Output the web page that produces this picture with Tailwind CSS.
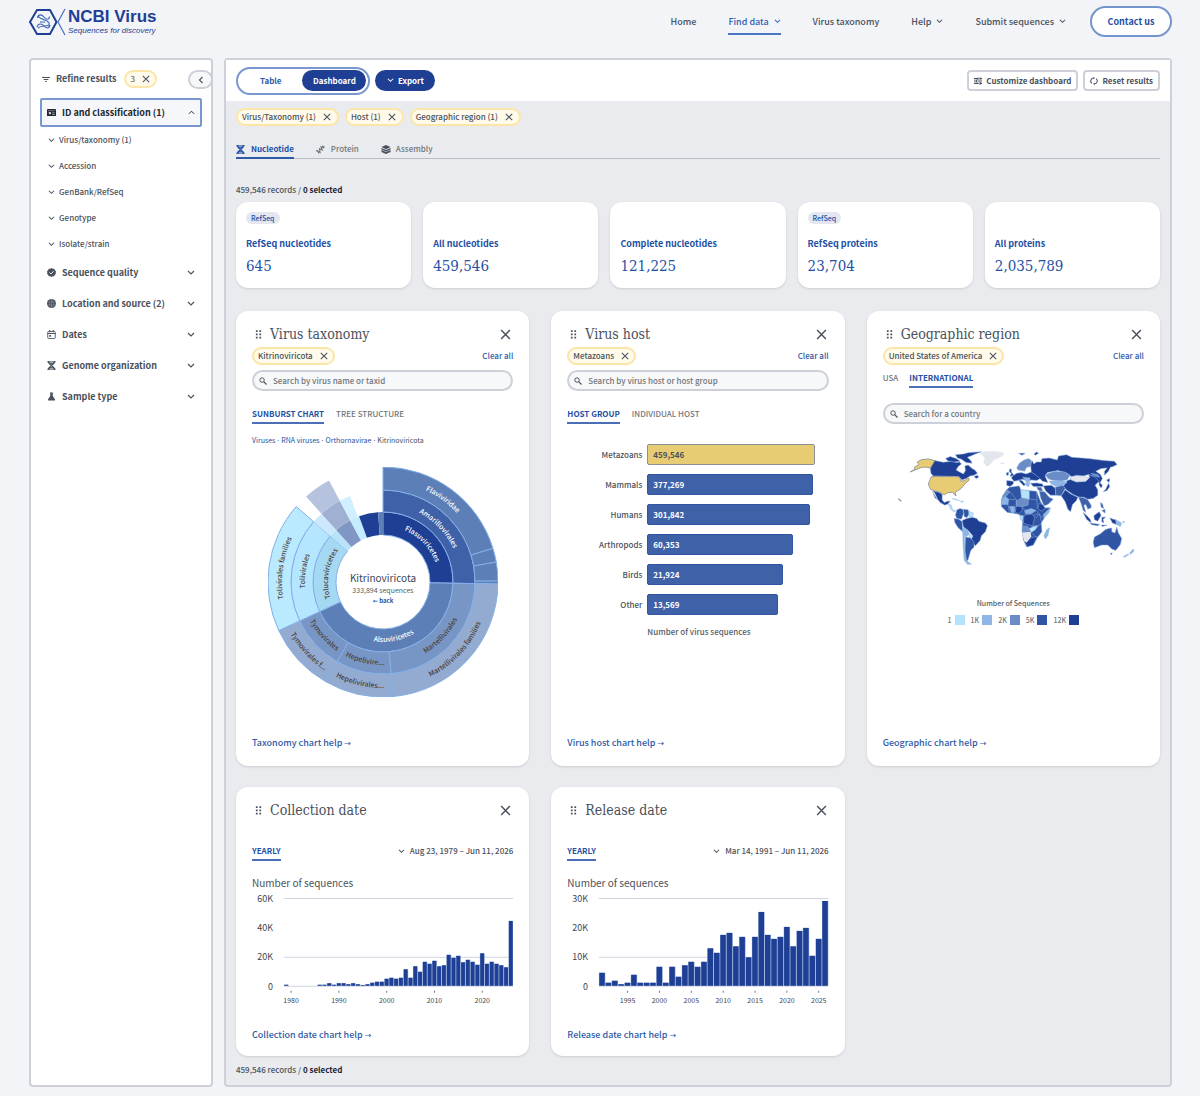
<!doctype html>
<html lang="en">
  <head>
    <meta charset="UTF-8" />
    <meta name="viewport" content="width=device-width, initial-scale=1.0" />
    <title>NCBI Virus</title>
    <script src="https://cdn.jsdelivr.net/npm/@tailwindcss/browser@4"></script>
  </head>
  <body class="flex min-h-screen flex-col bg-[#f2f4f8] pr-7 pb-[9px] pl-[29px] font-['Noto_Sans_CJK_JP','Noto_Sans_CJK_SC',sans-serif] text-[8px] leading-4 font-medium text-[#4a515c]">
    <!-- icon sprite -->
    <svg class="hidden">
      <symbol id="down" viewBox="0 0 8 8"><path d="M1 2 4 5 7 2" fill="none" stroke="currentColor" stroke-width="1.2" /></symbol>
      <symbol id="up" viewBox="0 0 8 8"><path d="M1 5.5 4 2.5 7 5.5" fill="none" stroke="currentColor" stroke-width="1.1" /></symbol>
      <symbol id="left" viewBox="0 0 8 8"><path d="M5.5 1 2.5 4 5.5 7" fill="none" stroke="currentColor" stroke-width="1.1" /></symbol>
      <symbol id="close" viewBox="0 0 10 10"><path d="M1 1 9 9M9 1 1 9" fill="none" stroke="currentColor" stroke-width="1.3" /></symbol>
      <symbol id="search" viewBox="0 0 10 10"><circle cx="3.8" cy="3.8" r="2.8" fill="none" stroke="currentColor" stroke-width="1.2" /><path d="M5.8 5.8 9.4 9.4" stroke="currentColor" stroke-width="1.4" /></symbol>
      <symbol id="drag" viewBox="0 0 8 10"><path d="M1 0h2v2H1zM5 0h2v2H5zM1 3.8h2v2H1zM5 3.8h2v2H5zM1 7.6h2v2H1zM5 7.6h2v2H5z" fill="currentColor" /></symbol>
      <symbol id="filter" viewBox="0 0 10 8"><path d="M0 1.5H10M2 4H8M4 6.5H6" stroke="currentColor" stroke-width="1.4" /></symbol>
      <symbol id="card" viewBox="0 0 10 10"><rect x="0" y="1" width="10" height="8" rx="1" fill="currentColor" /><path d="M1 3H9" stroke="#fff" stroke-width=".4" /><path d="M2 4.5h2.5v2.5H2zM6 5h2.5v.8H6zM6 6.6h2.5v.8H6z" fill="#ccc" /></symbol>
      <symbol id="check" viewBox="0 0 10 10"><path d="M5 0 6.4.8 8 .9 8.8 2.4 10 3.6 9.6 5 10 6.4 8.8 7.6 8 9.1 6.4 9.2 5 10 3.6 9.2 2 9.1 1.2 7.6 0 6.4.4 5 0 3.6 1.2 2.4 2 .9 3.6.8Z" fill="currentColor" /><path d="M2.8 5 4.4 6.6 7.3 3.6" fill="none" stroke="#fff" stroke-width="1" /></symbol>
      <symbol id="globe" viewBox="0 0 10 10"><circle cx="5" cy="5" r="5" fill="currentColor" /><path d="M0 3.5H10M0 6.5H10M5 0V10M5 0C2 2.5 2 7.5 5 10M5 0C8 2.5 8 7.5 5 10" fill="none" stroke="#aaa" stroke-width=".4" /></symbol>
      <symbol id="calendar" viewBox="0 0 10 10"><rect x=".8" y="1.6" width="8.4" height="7.8" rx="1" fill="none" stroke="currentColor" stroke-width="1" /><path d="M.8 3.8H9.2M3 0V2.4M7 0V2.4" stroke="currentColor" stroke-width="1.2" /><path d="M2.5 5.5H4.5V7.5H2.5z" fill="currentColor" /></symbol>
      <symbol id="dna" viewBox="0 0 10 10"><path d="M1.5 0C1.5 4 8.5 6 8.5 10M8.5 0C8.5 4 1.5 6 1.5 10" fill="none" stroke="currentColor" stroke-width="1.6" /><path d="M.5 1H9.5M2 2.6H8M2 7.4H8M.5 9H9.5" stroke="currentColor" stroke-width="1.1" /></symbol>
      <symbol id="flask" viewBox="0 0 10 10"><path d="M3.2.5h3.6v1H6.4v3L9 8.2Q9.3 9.4 8 9.4H2Q.7 9.4 1 8.2L3.6 4.5v-3H3.2Z" fill="currentColor" /></symbol>
      <symbol id="protein" viewBox="0 0 10 10"><path d="M.5 7C1 4 3 9 3.2 9.5M1 6.2 4.6 8.2 3.8 4.2 7 5.6 5.6 2 9 3.2M7 .8 9.6 2.6" fill="none" stroke="currentColor" stroke-width="1.2" /></symbol>
      <symbol id="layers" viewBox="0 0 10 10"><path d="M0 2.3 5 0 10 2.3 5 4.6ZM0 3.2 5 5.5 10 3.2V4.9L5 7.2 0 4.9ZM0 5.6 5 7.9 10 5.6V7.8L5 10 0 7.8Z" fill="currentColor" /></symbol>
      <symbol id="tune" viewBox="0 0 10 10"><path d="M0 2H5M7 2H10M0 5H3M5 5H10M0 8H6M8 8H10M5 .5V3.5M3.4 3.5V6.5M7.6 6.3V9.7M7.5 .5V3.5" stroke="currentColor" stroke-width="1.4" /></symbol>
      <symbol id="reset" viewBox="0 0 10 10"><path d="M2.4 8A3.8 3.8 0 0 1 4.6 1.2M7.6 2A3.8 3.8 0 0 1 5.4 8.8" fill="none" stroke="currentColor" stroke-width="1.3" /><path d="M4 0 6.2 1.3 4 2.8ZM6 7.2 3.8 8.7 6 10Z" fill="currentColor" /></symbol>
    </svg>

    <header class="flex h-[58px] items-start justify-between">
      <a href="#" class="flex pt-2 text-[#1f3f94]">
        <svg class="h-7 w-[38px]" viewBox="0 0 38 28" fill="none" stroke="currentColor">
          <path d="M8 2H21L27.500 14 21 26H8L1 14Z" stroke-width="2" />
          <path d="M36 1 29 14 36 27" stroke="#4a6fbd" stroke-width="1.200" />
          <path d="M8.500 10C9 5.500 13 6.500 15 9S20 12.500 20.500 8.500M8 19C9 15 13 15.500 15 18S20 21 21 17M9 8C11 12 18 11 20 15S12 17 9 20M11 14H16" stroke="#3a63b5" stroke-width="1.100" />
        </svg>
        <span class="ml-px font-['Liberation_Sans',Arial,sans-serif]">
          <span class="block text-[17px] leading-[18px] font-bold">NCBI Virus</span>
          <span class="block text-[8px] leading-[9px] font-normal italic">Sequences for discovery</span>
        </span>
      </a>
      <nav class="flex gap-8 pt-[14px] text-[9px]">
        <a href="#">Home</a>
        <a href="#" class="flex h-[21px] items-start gap-[5px] border-b-2 border-[#4a76c4] text-[#2f5fb5]">Find data <svg class="mt-1 size-[7px]"><use href="#down" /></svg></a>
        <a href="#">Virus taxonomy</a>
        <a href="#" class="flex gap-[5px]">Help <svg class="mt-1 size-[7px]"><use href="#down" /></svg></a>
        <a href="#" class="flex gap-[5px]">Submit sequences <svg class="mt-1 size-[7px]"><use href="#down" /></svg></a>
        <a href="#" class="-mt-2 -ml-2 flex h-[31px] w-[82px] items-center justify-center rounded-full border-2 border-[#7495cc] bg-white font-bold text-[#2450a4]">Contact us</a>
      </nav>
    </header>

    <div class="flex flex-1 gap-[11px]">
      <aside class="relative w-[184px] shrink-0 rounded-sm border-2 border-[#cdd0d8] bg-white px-[9px] pt-[10px]">
        <div class="flex h-[18px] items-center px-[2px] text-[9px] font-bold">
          <svg class="mr-[6px] h-[7px] w-2"><use href="#filter" /></svg>
          Refine results
          <button class="ml-[7px] flex h-[18px] items-center gap-[7px] rounded-full border-2 border-[#fbe6a8] bg-[#fffaea] px-[5px] text-[8px] font-normal">3 <svg class="size-2"><use href="#close" /></svg></button>
        </div>
        <button aria-label="Collapse filters" class="absolute top-[10px] -right-[2px] flex h-[19px] w-[25px] items-center justify-center rounded-full border-2 border-[#cdd0d8] bg-[#f7f8fa]"><svg class="size-2"><use href="#left" /></svg></button>
        <button class="mt-[10px] flex h-[29px] w-full items-center rounded-xs border-2 border-[#7898cf] bg-[#f5f7fa] px-[5px] text-[9px] font-bold text-[#20262f]">
          <svg class="mr-[6px] size-[9px]"><use href="#card" /></svg>ID and classification (1)<svg class="ml-auto size-[7px]"><use href="#up" /></svg>
        </button>
        <ul id="fields"></ul>
        <ul id="groups"></ul>
      </aside>

      <main class="min-w-0 flex-1 rounded-sm border-2 border-[#cdd0d8] bg-[#e9ebef]">
        <div class="flex h-[41px] items-center bg-white px-[10px]">
          <div class="flex h-[28px] items-center rounded-full border-2 border-[#7898cf] p-[2px] pl-[22px] font-bold">
            <button class="text-[#2f5aa8]">Table</button>
            <button class="ml-[21px] h-[21px] w-16 rounded-full bg-[#1f3f94] text-white">Dashboard</button>
          </div>
          <button class="ml-[5px] flex h-[21px] w-[60px] items-center justify-center gap-1 rounded-full bg-[#1f3f94] font-bold text-white"><svg class="size-[7px]"><use href="#down" /></svg>Export</button>
          <button class="ml-auto flex h-[21px] items-center gap-1 rounded-sm border-2 border-[#cdd0d8] px-[5px] font-bold"><svg class="size-2"><use href="#tune" /></svg>Customize dashboard</button>
          <button class="ml-[5px] flex h-[21px] items-center gap-1 rounded-sm border-2 border-[#cdd0d8] px-[5px] font-bold"><svg class="size-2"><use href="#reset" /></svg>Reset results</button>
        </div>

        <div class="px-[10px] pt-[7px]">
          <div class="flex gap-[6px]">
            <button class="flex h-[18px] items-center gap-[7px] rounded-full border-2 border-[#fbe6a8] bg-[#fffaea] pr-[6px] pl-1">Virus/Taxonomy (1)<svg class="size-2"><use href="#close" /></svg></button>
            <button class="flex h-[18px] items-center gap-[7px] rounded-full border-2 border-[#fbe6a8] bg-[#fffaea] pr-[6px] pl-1">Host (1)<svg class="size-2"><use href="#close" /></svg></button>
            <button class="flex h-[18px] items-center gap-[7px] rounded-full border-2 border-[#fbe6a8] bg-[#fffaea] pr-[6px] pl-1">Geographic region (1)<svg class="size-2"><use href="#close" /></svg></button>
          </div>
          <div class="mt-[15px] flex gap-[22px] border-b border-[#b9bdc7] text-[#71767a]">
            <button class="-mb-px flex items-center gap-[6px] border-b-2 border-[#2f5aa8] font-bold text-[#2450a4]"><svg class="size-[9px]"><use href="#dna" /></svg>Nucleotide</button>
            <button class="-mb-px flex items-center gap-[6px] border-b-2 border-transparent"><svg class="size-[9px]"><use href="#protein" /></svg>Protein</button>
            <button class="-mb-px flex items-center gap-[5px] border-b-2 border-transparent"><svg class="h-[9px] w-[10px] text-[#4a515c]"><use href="#layers" /></svg>Assembly</button>
          </div>

          <p class="mt-[23px]">459,546 records / <b class="text-[#20262f]">0 selected</b></p>

          <section id="stats" class="mt-1 grid grid-cols-5 gap-3"></section>

          <section class="mt-[23px] grid grid-cols-3 gap-x-[22px] gap-y-[21px]">
            <article class="flex min-h-[455px] flex-col rounded-xl bg-white px-4 pt-3 pb-[14px] shadow-sm">
              <div class="flex h-[22px] items-center gap-2">
                <svg class="ml-[3px] h-[9px] w-[7px]"><use href="#drag" /></svg>
                <h2 class="font-['DejaVu_Serif_Condensed','DejaVu_Serif',serif] text-[14px] font-normal">Virus taxonomy</h2>
                <button aria-label="Remove Virus taxonomy" class="mr-[2px] ml-auto"><svg class="size-[11px]"><use href="#close" /></svg></button>
              </div>
              <div class="mt-[2px] flex h-[18px] items-center justify-between">
                <button class="flex h-[18px] items-center gap-[7px] rounded-full border-2 border-[#fbe6a8] bg-[#fffaea] pr-[5px] pl-1">Kitrinoviricota<svg class="size-2"><use href="#close" /></svg></button>
                <a href="#" class="text-[#2f5aa8]">Clear all</a>
              </div>
              <label class="mt-[5px] flex h-[21px] items-center gap-[6px] rounded-full border-2 border-[#cdd0d8] bg-[#f7f8fa] pr-2 pl-[5px]">
                <svg class="size-2"><use href="#search" /></svg>
                <input type="text" aria-label="Search by virus name or taxid" placeholder="Search by virus name or taxid" class="min-w-0 flex-1 leading-4 outline-none placeholder:text-[#71767a]" />
              </label>
              <div class="mt-[15px] flex gap-3 text-[#71767a]">
                <button class="border-b-2 border-[#4a6fb8] font-bold text-[#2450a4]">SUNBURST CHART</button>
                <button class="border-b-2 border-transparent">TREE STRUCTURE</button>
              </div>
              <p class="mt-2 flex gap-px text-[7px] font-normal">
                <a href="#" class="text-[#2450a4]">Viruses</a>·<a href="#" class="text-[#2450a4]">RNA viruses</a>·<a href="#" class="text-[#2450a4]">Orthornavirae</a>·<span>Kitrinoviricota</span>
              </p>
              <svg id="sunburst" class="mx-auto mt-[19px] size-[230px] shrink-0" viewBox="-115 -115 230 230"></svg>
              <a href="#" class="mt-auto text-[9px] text-[#2f5aa8]">Taxonomy chart help <span class="font-['DejaVu_Sans'] text-[8px]">→</span></a>
            </article>

            <article class="flex min-h-[455px] flex-col rounded-xl bg-white px-4 pt-3 pb-[14px] shadow-sm">
              <div class="flex h-[22px] items-center gap-2">
                <svg class="ml-[3px] h-[9px] w-[7px]"><use href="#drag" /></svg>
                <h2 class="font-['DejaVu_Serif_Condensed','DejaVu_Serif',serif] text-[14px] font-normal">Virus host</h2>
                <button aria-label="Remove Virus host" class="mr-[2px] ml-auto"><svg class="size-[11px]"><use href="#close" /></svg></button>
              </div>
              <div class="mt-[2px] flex h-[18px] items-center justify-between">
                <button class="flex h-[18px] items-center gap-[7px] rounded-full border-2 border-[#fbe6a8] bg-[#fffaea] pr-[5px] pl-1">Metazoans<svg class="size-2"><use href="#close" /></svg></button>
                <a href="#" class="text-[#2f5aa8]">Clear all</a>
              </div>
              <label class="mt-[5px] flex h-[21px] items-center gap-[6px] rounded-full border-2 border-[#cdd0d8] bg-[#f7f8fa] pr-2 pl-[5px]">
                <svg class="size-2"><use href="#search" /></svg>
                <input type="text" aria-label="Search by virus host or host group" placeholder="Search by virus host or host group" class="min-w-0 flex-1 leading-4 outline-none placeholder:text-[#71767a]" />
              </label>
              <div class="mt-[15px] flex gap-3 text-[#71767a]">
                <button class="border-b-2 border-[#4a6fb8] font-bold text-[#2450a4]">HOST GROUP</button>
                <button class="border-b-2 border-transparent">INDIVIDUAL HOST</button>
              </div>
              <div id="hosts" class="mt-5 grid grid-cols-[75px_1fr] items-center gap-x-[5px] gap-y-[9px]"></div>
              <p class="mt-[9px] ml-20 text-[#565c65]">Number of virus sequences</p>
              <a href="#" class="mt-auto text-[9px] text-[#2f5aa8]">Virus host chart help <span class="font-['DejaVu_Sans'] text-[8px]">→</span></a>
            </article>

            <article class="flex min-h-[455px] flex-col rounded-xl bg-white px-4 pt-3 pb-[14px] shadow-sm">
              <div class="flex h-[22px] items-center gap-2">
                <svg class="ml-[3px] h-[9px] w-[7px]"><use href="#drag" /></svg>
                <h2 class="font-['DejaVu_Serif_Condensed','DejaVu_Serif',serif] text-[14px] font-normal">Geographic region</h2>
                <button aria-label="Remove Geographic region" class="mr-[2px] ml-auto"><svg class="size-[11px]"><use href="#close" /></svg></button>
              </div>
              <div class="mt-[2px] flex h-[18px] items-center justify-between">
                <button class="flex h-[18px] items-center gap-[7px] rounded-full border-2 border-[#fbe6a8] bg-[#fffaea] pr-[5px] pl-1">United States of America<svg class="size-2"><use href="#close" /></svg></button>
                <a href="#" class="text-[#2f5aa8]">Clear all</a>
              </div>
              <div class="mt-[5px] flex gap-[11px] text-[#71767a]">
                <button class="border-b-2 border-transparent">USA</button>
                <button class="border-b-2 border-[#4a6fb8] font-bold text-[#2450a4]">INTERNATIONAL</button>
              </div>
              <label class="mt-[15px] flex h-[21px] items-center gap-[6px] rounded-full border-2 border-[#cdd0d8] bg-[#f7f8fa] pr-2 pl-[5px]">
                <svg class="size-2"><use href="#search" /></svg>
                <input type="text" aria-label="Search for a country" placeholder="Search for a country" class="min-w-0 flex-1 leading-4 outline-none placeholder:text-[#71767a]" />
              </label>
              <svg class="mt-4 w-full" viewBox="-6 0 786 390" stroke="#8fb4e3" stroke-width="1.500" stroke-linejoin="round">
                <g fill="#e4e6ee" stroke="none">
                  <path d="M285 38 305 34 330 34 358 38 354 48 340 56 328 60 314 76 306 80 296 68 300 54Z" />
                  <path d="M346 70 354 67 360 70 352 74Z" />
                </g>
                <!-- Americas -->
                <g fill="#1f3f94">
                  <path d="M137 64 150 62 175 67 200 64 216 68 224 66 230 72 220 80 214 90 224 96 236 102 242 92 240 78 250 75 262 86 270 90 278 100 268 106 256 108 244 116 232 120 222 110 145 108 138 100 136 84Z" />
                  <path d="M182 56 196 50 214 56 226 64 208 66 190 63ZM212 44 236 42 250 38 290 35 272 42 258 48 248 52 258 62 262 70 244 68 230 58 218 54Z" />
                  <path d="M268 110 278 106 282 112 274 116Z" />
                  <path d="M143 153 162 157 172 163 172 180 178 188 188 184 196 184 190 192 180 196 166 188 158 178 150 160ZM144 158 150 168 156 178 150 174Z" />
                  <path d="M232 242 246 236 262 232 276 236 282 244 302 250 308 258 302 276 290 288 286 302 272 318 262 308 260 296 264 288 250 272 236 262Z" />
                </g>
                <g fill="#2f55a4">
                  <path d="M216 210 226 206 236 210 236 222 230 238 216 236 212 226Z" />
                  <path d="M236 208 250 210 254 222 246 234 238 230Z" />
                  <path d="M208 236 222 238 232 246 234 276 220 264 210 248Z" />
                  <path d="M242 292 258 294 268 308 268 322 258 332 254 346 250 360 244 366 240 340Z" />
                </g>
                <g fill="#8db5e6">
                  <path d="M234 264 248 270 254 284 242 292 234 284Z" />
                  <path d="M234 284 240 292 240 330 246 364 260 374 248 374 238 362 235 320Z" />
                </g>
                <g fill="#b5e3fb">
                  <path d="M190 192 200 196 202 208 212 214 206 216 196 206ZM252 214 266 220 262 232 252 230ZM254 284 264 290 260 297 254 292ZM202 176 214 178 224 183 212 180ZM226 184 236 184 234 188Z" />
                </g>
                <g fill="#e8cc74" stroke="#8b8f96" stroke-width="2.500">
                  <path d="M88 82 102 74 97 66 110 59 130 57 150 62 137 84 126 82 112 82 96 88 76 96 90 88Z" />
                  <path d="M140 110 216 110 226 114 228 124 240 122 250 113 254 120 240 132 230 145 220 152 211 158 214 168 208 164 204 157 190 158 178 165 168 158 150 153 137 148 130 132Z" />
                  <path d="M40 177 44 178 49 184 45 183Z" />
                </g>
                <!-- Europe and Asia -->
                <g fill="#1f3f94">
                  <path d="M374 88 380 87 380 96 388 106 376 110 380 100 374 96ZM366 98 372 98 371 106 365 106Z" />
                  <path d="M384 108 396 100 410 98 424 102 440 96 456 106 470 114 456 122 440 120 430 124 414 118 400 122 388 124 380 114Z" />
                  <path d="M366 122 386 124 386 132 376 140 366 136ZM402 120 412 122 422 134 418 138 406 126ZM438 130 456 129 474 132 476 140 446 140Z" />
                  <path d="M440 96 438 74 442 62 448 72 456 66 470 66 472 56 494 54 518 60 522 48 546 44 562 52 590 54 612 56 660 62 690 64 698 74 686 80 678 82 672 94 660 106 660 94 668 84 650 86 634 94 648 104 654 116 646 130 636 124 628 108 612 104 590 110 560 110 548 100 520 92 488 98 482 110 490 128 474 124 462 112Z" />
                  <path d="M548 122 560 118 576 126 604 124 616 112 612 104 630 110 644 124 632 136 640 150 640 166 626 176 610 178 598 172 584 172 566 164 548 152 536 140Z" />
                  <path d="M476 138 500 136 512 144 514 166 498 166 484 154ZM530 168 542 150 558 162 580 172 576 182 564 194 558 216 550 208 542 186Z" />
                  <path d="M644 126 654 136 650 144 644 136ZM672 130 676 140 668 152 656 156 664 148ZM666 120 676 116 674 128ZM448 42 456 36 462 40 452 46ZM402 40 422 40 412 46Z" />
                  <path d="M596 218 606 226 618 240 620 250 606 238ZM628 228 644 216 650 226 640 244 630 240ZM618 250 646 254 640 258 620 254ZM652 232 664 232 656 238 658 250 652 246ZM676 234 686 238 694 240 696 254 684 250ZM650 256 668 256 654 260Z" />
                </g>
                <g fill="#6b8cc7">
                  <path d="M396 84 404 70 418 60 432 56 440 62 438 80 426 82 420 94 410 92 400 90Z" />
                  <path d="M482 104 510 94 540 96 556 106 548 120 526 124 500 120 490 116Z" />
                  <path d="M620 100 640 104 646 112 634 110Z" />
                </g>
                <g fill="#8db5e6">
                  <path d="M494 124 514 122 540 124 548 128 530 138 514 140 500 132Z" />
                  <path d="M414 112 436 114 436 124 426 126ZM422 128 436 127 432 140 426 138Z" />
                </g>
                <path fill="#e4e6ee" d="M556 112 576 106 596 108 614 114 604 124 576 126 560 120Z" />
                <g fill="#3f61a8">
                  <path d="M512 142 536 136 542 146 530 168 514 166ZM456 142 470 142 474 154 462 152Z" />
                  <path d="M464 154 480 156 494 172 506 178 490 194 478 198 468 174Z" />
                  <path d="M582 172 598 174 610 180 620 196 620 204 610 208 604 194 598 196 604 218 596 212 590 192Z" />
                  <path d="M648 188 654 192 658 206 650 202ZM652 212 662 208 662 220Z" />
                </g>
                <!-- Africa -->
                <path fill="#2f55a4" d="M366 150 374 142 404 138 408 150 430 152 456 154 468 186 480 204 496 204 478 236 470 250 472 276 458 294 446 316 426 322 416 300 412 272 414 246 404 224 386 220 368 218 350 200 350 178Z" />
                <g fill="#1f3f94">
                  <path d="M394 200 412 198 412 212 402 222 392 216ZM418 226 442 222 450 234 444 258 426 254 416 250ZM464 190 476 196 482 206 470 214 460 206ZM422 310 440 294 458 290 446 316 428 321ZM448 226 460 222 456 234Z" />
                </g>
                <g fill="#6b8cc7">
                  <path d="M394 184 408 176 432 178 430 196 412 200 396 198ZM414 258 430 260 436 274 414 276ZM366 150 352 170 362 172 376 156Z" />
                </g>
                <g fill="#8db5e6">
                  <path d="M350 178 362 170 372 178 370 194 352 194ZM374 200 390 200 390 218 380 218ZM420 212 440 206 454 212 440 222 422 222ZM486 270 495 264 490 288 482 298 478 288ZM488 212 498 204 492 220 478 234 476 224Z" />
                </g>
                <g fill="#b5e3fb">
                  <path d="M408 150 434 152 434 178 410 174ZM434 266 446 260 460 258 452 270 440 278ZM406 226 416 228 414 242 408 240Z" />
                </g>
                <path fill="#e4e6ee" stroke="none" d="M412 278 438 276 440 290 426 308 418 304Z" />
                <!-- borders across west, central and east Africa -->
                <path fill="none" d="M376 156 396 180 394 200M434 178 456 180M456 154 458 206M372 178 396 180M412 200 422 214M454 212 464 222 472 248M446 258 460 258 470 252M460 222 478 236M370 194 374 218M436 274 452 290" />
                <!-- Oceania -->
                <path fill="#2f55a4" d="M630 292 648 282 662 270 672 266 682 265 682 276 692 280 697 262 702 280 712 296 708 314 694 332 682 328 670 316 652 316 630 324 626 308ZM678 340 684 340 680 346Z" />
                <path fill="#8db5e6" d="M746 328 749 334 738 344 736 340ZM734 344 722 352 716 351 728 344ZM694 240 712 250 708 260 696 254ZM714 246 720 244 718 250Z" />
              </svg>
              <p class="mt-[25px] text-center text-[7px] text-[#565c65]">Number of Sequences</p>
              <div id="legend" class="mt-px flex justify-center gap-[6px] text-[7px] text-[#71767a]"></div>
              <a href="#" class="mt-auto text-[9px] text-[#2f5aa8]">Geographic chart help <span class="font-['DejaVu_Sans'] text-[8px]">→</span></a>
            </article>

            <article class="flex min-h-[269px] flex-col rounded-xl bg-white px-4 pt-3 pb-3 shadow-sm">
              <div class="flex h-[22px] items-center gap-2">
                <svg class="ml-[3px] h-[9px] w-[7px]"><use href="#drag" /></svg>
                <h2 class="font-['DejaVu_Serif_Condensed','DejaVu_Serif',serif] text-[14px] font-normal">Collection date</h2>
                <button aria-label="Remove Collection date" class="mr-[2px] ml-auto"><svg class="size-[11px]"><use href="#close" /></svg></button>
              </div>
              <div class="mt-[22px] flex items-start justify-between">
                <button class="border-b-2 border-[#4a6fb8] font-bold text-[#2450a4]">YEARLY</button>
                <button class="flex items-center gap-[5px]"><svg class="size-[7px]"><use href="#down" /></svg>Aug 23, 1979 – Jun 11, 2026</button>
              </div>
              <p class="mt-[14px] text-[10px] font-normal">Number of sequences</p>
              <div id="collection"></div>
              <a href="#" class="mt-auto text-[9px] text-[#2f5aa8]">Collection date chart help <span class="font-['DejaVu_Sans'] text-[8px]">→</span></a>
            </article>

            <article class="flex min-h-[269px] flex-col rounded-xl bg-white px-4 pt-3 pb-3 shadow-sm">
              <div class="flex h-[22px] items-center gap-2">
                <svg class="ml-[3px] h-[9px] w-[7px]"><use href="#drag" /></svg>
                <h2 class="font-['DejaVu_Serif_Condensed','DejaVu_Serif',serif] text-[14px] font-normal">Release date</h2>
                <button aria-label="Remove Release date" class="mr-[2px] ml-auto"><svg class="size-[11px]"><use href="#close" /></svg></button>
              </div>
              <div class="mt-[22px] flex items-start justify-between">
                <button class="border-b-2 border-[#4a6fb8] font-bold text-[#2450a4]">YEARLY</button>
                <button class="flex items-center gap-[5px]"><svg class="size-[7px]"><use href="#down" /></svg>Mar 14, 1991 – Jun 11, 2026</button>
              </div>
              <p class="mt-[14px] text-[10px] font-normal">Number of sequences</p>
              <div id="release"></div>
              <a href="#" class="mt-auto text-[9px] text-[#2f5aa8]">Release date chart help <span class="font-['DejaVu_Sans'] text-[8px]">→</span></a>
            </article>
          </section>

          <p class="mt-[6px]">459,546 records / <b class="text-[#20262f]">0 selected</b></p>
        </div>
      </main>
    </div>

    <script>
      const byId = id => document.getElementById(id);

      // sidebar
      byId("fields").innerHTML = ["Virus/taxonomy (1)", "Accession", "GenBank/RefSeq", "Genotype", "Isolate/strain"]
        .map(name => `<li><button class="flex h-[26px] items-center gap-1 pl-2"><svg class="size-[7px]"><use href="#down" /></svg>${name}</button></li>`)
        .join("");
      byId("groups").innerHTML = [
        ["check", "Sequence quality"],
        ["globe", "Location and source (2)"],
        ["calendar", "Dates"],
        ["dna", "Genome organization"],
        ["flask", "Sample type"],
      ]
        .map(([icon, name]) => `<li><button class="flex h-[31px] w-full items-center px-[7px] text-[9px] font-bold"><svg class="mr-[6px] size-[9px]"><use href="#${icon}" /></svg>${name}<svg class="ml-auto size-2"><use href="#down" /></svg></button></li>`)
        .join("");

      // totals
      byId("stats").innerHTML = [
        ["RefSeq nucleotides", "645", true],
        ["All nucleotides", "459,546", false],
        ["Complete nucleotides", "121,225", false],
        ["RefSeq proteins", "23,704", true],
        ["All proteins", "2,035,789", false],
      ]
        .map(([name, total, refseq]) => `
          <a href="#" class="h-[86px] rounded-xl bg-white px-[10px] pt-[10px] text-[#2450a4] shadow-sm">
            <span class="flex h-3">${refseq ? '<span class="rounded-full bg-[#e4e7ef] px-[5px] text-[7px] leading-3">RefSeq</span>' : ""}</span>
            <span class="mt-3 block text-[9px] font-bold">${name}</span>
            <span class="mt-1 block font-['DejaVu_Serif_Condensed','DejaVu_Serif',serif] text-[15px] leading-5 font-normal">${total}</span>
          </a>`)
        .join("");

      // host bars
      byId("hosts").innerHTML = [
        ["Metazoans", "459,546", 168],
        ["Mammals", "377,269", 166],
        ["Humans", "301,842", 163],
        ["Arthropods", "60,353", 146],
        ["Birds", "21,924", 136],
        ["Other", "13,569", 131],
      ]
        .map(([name, total, size], i) => `
          <span class="text-right">${name}</span>
          <div class="flex h-[21px] items-center rounded-xs border pl-[5px] font-bold ${i ? "border-[#2f55a4] bg-[#3f61a8] text-white" : "border-[#8b8f96] bg-[#e8cc74]"}" style="width:${(size / 182) * 100}%">${total}</div>`)
        .join("");

      byId("legend").innerHTML = [
        ["1", "#b5e3fb"], ["1K", "#8db5e6"], ["2K", "#6b8cc7"], ["5K", "#2f55a4"], ["12K", "#1f3f94"],
      ]
        .map(([label, color]) => `<span class="flex items-center gap-[3px]">${label}<span class="size-[10px]" style="background:${color}"></span></span>`)
        .join("");

      // sunburst: inner ring, outer ring, start and end in degrees, fill
      const radii = [47, 70, 92, 115];
      const segments = [
        [0, 1, 0, 91, "#1f3f94"],
        [1, 2, 0, 91, "#3f61a8"],
        [2, 3, 0, 73, "#5c7fb7"],
        [2, 3, 73, 80, "#5c7fb7"],
        [2, 3, 80, 89.5, "#5c7fb7"],
        [2, 3, 89.5, 91, "#5c7fb7"],
        [0, 1, 91, 245, "#5c7fb7"],
        [1, 2, 91, 175, "#7896c5"],
        [1, 2, 175, 210, "#7896c5"],
        [1, 2, 210, 245, "#7896c5"],
        [2, 3, 91, 175, "#93abd1"],
        [2, 3, 175, 210, "#93abd1"],
        [2, 3, 210, 245, "#93abd1"],
        [0, 1, 245, 311, "#a5d8f3"],
        [1, 2, 245, 311, "#b4e7ff"],
        [2, 3, 245, 311, "#b9eaff"],
        [0, 1, 311, 318, "#b9e3fb"],
        [1, 2, 311, 318, "#cbe8fc"],
        [0, 1, 318, 332, "#8097c6"],
        [1, 2, 318, 332, "#9fb0d3"],
        [2, 3, 318, 332, "#b5c3df"],
        [0, 1, 332, 340, "#c4ecff"],
        [1, 2, 332, 339, "#d2efff"],
        [0, 1, 340, 356, "#1f3f94"],
        [0, 1, 356, 360, "#5c7fb7"],
      ];
      // label, radius, middle angle, fill; labels in the lower half run counter-clockwise
      const labels = [
        ["Flasuviricetes", 56, 46, "#fff"],
        ["Amarillovirales", 78, 46, "#fff"],
        ["Flaviviridae", 101, 36, "#fff"],
        ["Alsuviricetes", 60, 169, "#fff"],
        ["Martellivirales", 83, 133, "#4b4038"],
        ["Martellivirales families", 106, 133, "#4b4038"],
        ["Hepelivire...", 83, 193, "#4b4038"],
        ["Hepelivirales...", 106, 193, "#4b4038"],
        ["Tymovirales", 83, 228, "#4b4038"],
        ["Tymovirales f...", 106, 227, "#4b4038"],
        ["Tolucaviricetes", 55, 279, "#4b4038"],
        ["Tolivirales", 78, 278, "#4b4038"],
        ["Tolivirales families", 101, 278, "#4b4038"],
      ];
      const point = (r, deg) => {
        const a = (deg * Math.PI) / 180;
        return `${(r * Math.sin(a)).toFixed(2)} ${(-r * Math.cos(a)).toFixed(2)}`;
      };
      let art = "";
      for (const [inner, outer, from, to, fill] of segments) {
        const r0 = radii[inner];
        const r1 = radii[outer];
        const edge = from >= 311 ? "none" : "#84b0e8";
        art += `<path d="M${point(r1, from)}A${r1} ${r1} 0 0 1 ${point(r1, to)}L${point(r0, to)}A${r0} ${r0} 0 0 0 ${point(r0, from)}Z" fill="${fill}" stroke="${edge}" stroke-width="1" />`;
      }
      labels.forEach(([text, r, mid, fill], i) => {
        const under = mid > 100 && mid < 260;
        const [from, to, sweep] = under ? [mid + 60, mid - 60, 0] : [mid - 60, mid + 60, 1];
        art += `<path id="arc${i}" d="M${point(r, from)}A${r} ${r} 0 0 ${sweep} ${point(r, to)}" fill="none" />
          <text class="text-[7px]" fill="${fill}" text-anchor="middle"><textPath href="#arc${i}" startOffset="50%">${text}</textPath></text>`;
      });
      art += `
        <text class="text-[10px] font-normal" fill="#3d4551" text-anchor="middle">Kitrinoviricota</text>
        <text y="11" class="text-[7px] font-normal" fill="#565c65" text-anchor="middle">333,894 sequences</text>
        <text y="21" class="text-[6px] font-bold" fill="#2450a4" text-anchor="middle"><tspan class="font-['DejaVu_Sans']">←</tspan> back</text>`;
      byId("sunburst").innerHTML = art;

      // yearly histograms, bar heights out of 88
      function histogram(id, bars, scale, firstYear, years) {
        const step = 230 / bars.length;
        let out = "";
        [0, 59, 88].forEach(y => {
          out += `<path d="M32 ${y + 7.5}H262" stroke="#cfd4e0" />`;
        });
        scale.forEach((label, i) => {
          out += `<text x="21" y="${11 + i * 29.3}" class="text-[9px] font-normal" fill="#3d4551" text-anchor="end">${label}</text>`;
        });
        bars.forEach((h, i) => {
          if (!h) return;
          out += `<rect x="${32 + i * step}" y="${95 - h}" width="${step}" height="${h}" fill="#86a1d3" />
            <rect x="${32 + i * step + 0.4}" y="${95 - h}" width="${step - 1}" height="${h}" fill="#1f3f94" />`;
        });
        years.forEach(year => {
          const x = 32 + (year - firstYear + 0.5) * step;
          out += `<path d="M${x} 100V102" stroke="#71767a" /><text x="${x}" y="112" class="text-[7px] font-normal" fill="#3d4551" text-anchor="middle">${year}</text>`;
        });
        byId(id).innerHTML = `<svg class="w-full" viewBox="0 0 262 118">${out}</svg>`;
      }
      histogram(
        "collection",
        [1, 0, 0, 0, 0, 0, 0, 1, 1, 2.5, 1, 2.5, 2.5, 1.5, 2.5, 1.5, 0.7, 1.5, 3, 4, 4, 7, 8, 7, 8, 16.5, 8, 19.5, 14, 24, 22, 25, 19.5, 20.5, 31, 28, 30, 23.5, 26, 24, 21, 32.5, 22, 24, 22, 20.5, 18.5, 65],
        ["60K", "40K", "20K", "0"],
        1979,
        [1980, 1990, 2000, 2010, 2020]
      );
      histogram(
        "release",
        [13, 3, 5, 1.5, 3, 11, 3, 3, 3, 19, 3, 19, 9, 20.5, 24, 19, 24, 37.5, 33, 51, 53, 39.5, 49, 28.5, 49, 74, 51, 47, 49, 59, 39.5, 55, 58, 30, 47, 85],
        ["30K", "20K", "10K", "0"],
        1991,
        [1995, 2000, 2005, 2010, 2015, 2020, 2025]
      );
    </script>
  </body>
</html>
